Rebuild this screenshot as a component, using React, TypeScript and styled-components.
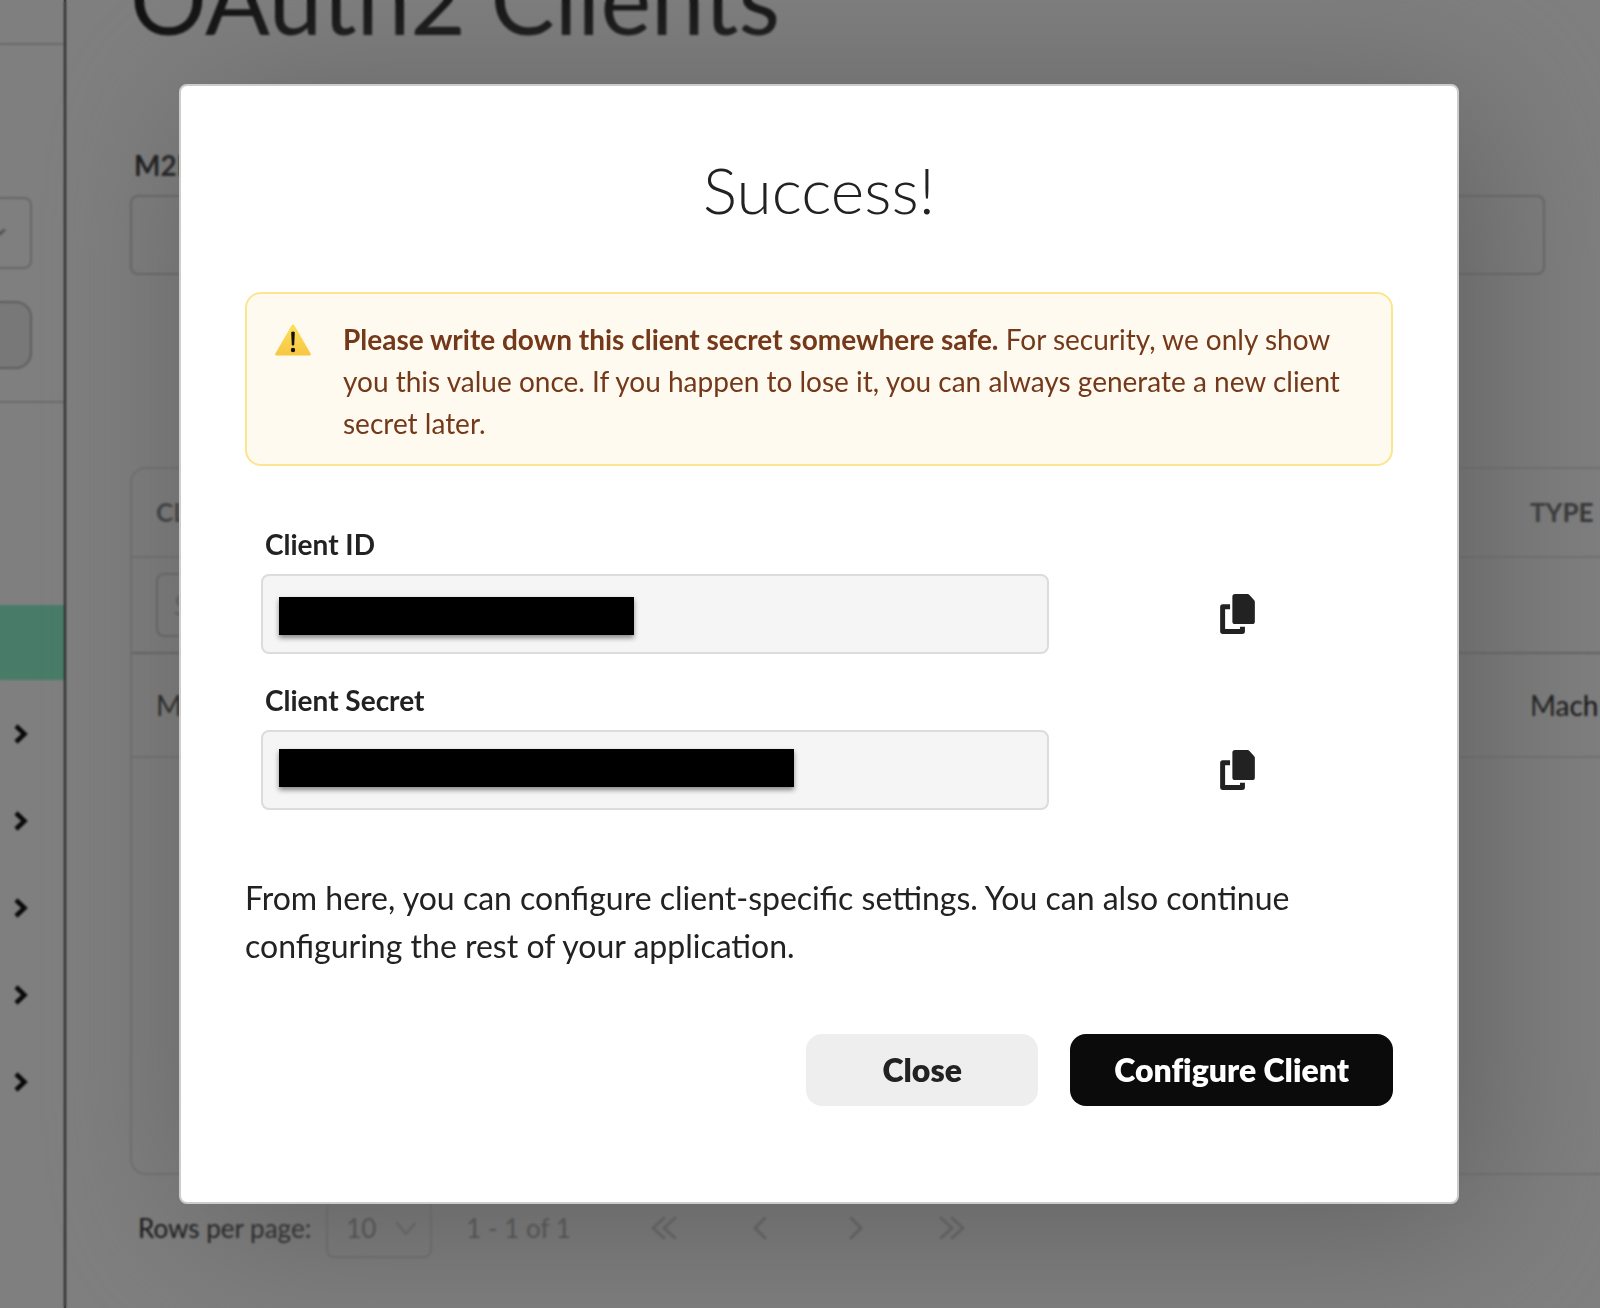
import React from "react";
import styled, { createGlobalStyle } from "styled-components";

const GlobalStyle = createGlobalStyle`
  *, *::before, *::after { box-sizing: border-box; }
  body {
    margin: 0;
    background: #fff;
    color: #222;
    font-family: Lato, "Liberation Sans", sans-serif;
    overflow: hidden;
  }
  button, input, select { font: inherit; color: inherit; }
  h1, h2, p { margin: 0; }
`;

/* ---------- Page behind the dialog ---------- */

const Page = styled.div`
  display: flex;
  height: 100vh;
  overflow: hidden;
`;

const Sidebar = styled.aside`
  flex: none;
  width: 66px;
  border-right: 2px solid #444;
`;

const SidebarTop = styled.div`
  height: 45px;
  border-bottom: 2px solid #d6d6d6;
`;

const SidebarControls = styled.div`
  display: flex;
  flex-direction: column;
  gap: 32px;
  height: 358px;
  padding: 152px 32px 0 0;
  border-bottom: 2px solid #d6d6d6;
`;

const SwitcherWrap = styled.div`
  position: relative;
`;

const Switcher = styled.select`
  display: block;
  appearance: none;
  width: 100%;
  height: 72px;
  border: 2px solid #ccc;
  border-left: 0;
  border-radius: 0 8px 8px 0;
  background: #fff;
`;

const SwitcherArrow = styled.svg`
  position: absolute;
  left: -16px;
  top: 32px;
  width: 22px;
  height: 12px;
  pointer-events: none;
`;

const SidebarButton = styled.button`
  width: 100%;
  height: 68px;
  border: 2px solid #bbb;
  border-left: 0;
  border-radius: 0 16px 16px 0;
  background: #f0f0f0;
`;

const Nav = styled.nav`
  display: flex;
  flex-direction: column;
  padding-top: 202px;
`;

const NavLink = styled.a<{ $active?: boolean }>`
  display: flex;
  align-items: center;
  justify-content: flex-end;
  height: ${(p) => (p.$active ? 75 : 87)}px;
  margin-bottom: ${(p) => (p.$active ? 10 : 0)}px;
  padding-right: 36px;
  background: ${(p) => (p.$active ? "#90f9d0" : "transparent")};
  color: #111;
`;

const Main = styled.main`
  flex: 1;
  min-width: 0;
  padding-left: 64px;
`;

const PageHeader = styled.header`
  display: flex;
  align-items: flex-end;
  height: 56px;
`;

const PageTitle = styled.h1`
  font-size: 96px;
  line-height: 116px;
  font-weight: 400;
  white-space: nowrap;
`;

const Label = styled.label`
  display: block;
  padding-left: 4px;
  font-size: 28px;
  line-height: 36px;
  font-weight: 700;
`;

const PageForm = styled.div`
  display: flex;
  flex-direction: column;
  gap: 12px;
  margin: 91px 55px 192px 0;
`;

const PageInput = styled.input`
  width: 100%;
  height: 80px;
  padding: 0 16px;
  border: 2px solid #ccc;
  border-radius: 8px;
  background: #fff;
  font-size: 28px;
`;

const TableFrame = styled.div`
  height: 708px;
  border: 2px solid #e0e0e0;
  border-right: 0;
  border-radius: 16px 0 0 16px;
  overflow: hidden;
`;

const Table = styled.table`
  width: 100%;
  table-layout: fixed;
  border-spacing: 0;
  text-align: left;
  font-size: 28px;
  line-height: 34px;
  white-space: nowrap;
`;

const TypeCol = styled.col`
  width: 94px;
`;

const HeadCell = styled.th`
  height: 89px;
  padding: 0 0 2px 24px;
  border-bottom: 2px solid #e0e0e0;
  color: #666;
  font-size: 26px;
  font-weight: 700;
`;

const FilterCell = styled.td`
  height: 96px;
  padding: 0 0 0 24px;
  border-bottom: 2px solid #c4c4c4;
`;

const FilterInput = styled.input`
  display: block;
  width: 320px;
  height: 64px;
  padding: 0 16px;
  border: 2px solid #ccc;
  border-radius: 8px;
  background: #fff;
  &::placeholder { color: #bbb; }
`;

const Cell = styled.td`
  height: 104px;
  padding: 0 0 0 24px;
  border-bottom: 2px solid #e0e0e0;
`;

const Pagination = styled.div`
  display: flex;
  align-items: center;
  padding: 23px 0 0 8px;
  font-size: 26px;
  line-height: 32px;
`;

const SizeSelectWrap = styled.div`
  position: relative;
  margin: 0 34px 0 15px;
`;

const SizeSelect = styled.select`
  display: block;
  appearance: none;
  width: 106px;
  height: 60px;
  padding: 0 0 0 18px;
  border: 2px solid #dcdcdc;
  border-radius: 8px;
  background: #fff;
  color: #888;
`;

const SizeArrow = styled.svg`
  position: absolute;
  right: 15px;
  top: 24px;
  width: 22px;
  height: 14px;
  pointer-events: none;
`;

const RangeText = styled.span`
  margin-right: 45px;
  color: #888;
`;

const PagerButton = styled.button`
  display: grid;
  place-items: center;
  width: 96px;
  height: 60px;
  padding: 0;
  border: 0;
  background: none;
  color: #b8b8b8;
`;

/* ---------- Dialog ---------- */

const Overlay = styled.div`
  position: fixed;
  inset: 0;
  padding: 84px 141px 0 179px;
  background: rgba(0, 0, 0, 0.5);
  backdrop-filter: blur(1px);
`;

const Dialog = styled.section`
  display: flex;
  flex-direction: column;
  gap: 60px;
  padding: 62px 64px 96px;
  border: 2px solid #ccc;
  border-radius: 8px;
  background: #fff;
  box-shadow: 20px 20px 160px #616161;
`;

const DialogTitle = styled.h2`
  font-size: 64px;
  line-height: 84px;
  font-weight: 300;
  text-align: center;
`;

const Alert = styled.div`
  display: flex;
  align-items: flex-start;
  gap: 32px;
  padding: 24px 28px 20px;
  border: 2px solid #fbe58f;
  border-radius: 16px;
  background: #fffaef;
  color: #74391a;
  font-size: 28px;
  line-height: 42px;
`;

const AlertIcon = styled.svg`
  flex: none;
  width: 36px;
  height: 32px;
  margin-top: 6px;
`;

const Fields = styled.div`
  display: flex;
  flex-direction: column;
  gap: 28px;
  padding-left: 16px;
`;

const Field = styled.div`
  display: grid;
  grid-template-columns: minmax(0, 1fr) 312px;
  gap: 12px 32px;
  align-items: center;
`;

const FieldLabel = styled(Label)`
  grid-column: 1 / -1;
`;

const SecretBox = styled.div`
  position: relative;
`;

const SecretInput = styled.input`
  display: block;
  width: 100%;
  height: 80px;
  padding: 0 16px;
  border: 2px solid #dcdcdc;
  border-radius: 8px;
  background: #f5f5f5;
  font-size: 28px;
`;

const Redaction = styled.span<{ $width: number; $top: number }>`
  position: absolute;
  left: 18px;
  top: ${(p) => p.$top}px;
  width: ${(p) => p.$width}px;
  height: 38px;
  background: #000;
  box-shadow: 0 3px 5px rgba(0, 0, 0, 0.45);
`;

const CopyButton = styled.button`
  justify-self: center;
  display: grid;
  place-items: center;
  padding: 8px;
  border: 0;
  background: none;
`;

const Note = styled.p`
  padding: 4px 0;
  font-size: 32px;
  line-height: 48px;
`;

const Actions = styled.div`
  display: flex;
  justify-content: flex-end;
  gap: 32px;
`;

const Action = styled.button<{ $primary?: boolean }>`
  min-width: 232px;
  height: 72px;
  padding: 0 44px;
  border: 0;
  border-radius: 16px;
  background: ${(p) => (p.$primary ? "#0b0b0b" : "#eee")};
  color: ${(p) => (p.$primary ? "#fff" : "#222")};
  font-size: 32px;
  line-height: 40px;
  font-weight: 800;
  font-variant-ligatures: none;
  white-space: nowrap;
`;

const NavChevron = () => (
  <svg width="14" height="20" viewBox="0 0 14 20" fill="none" stroke="currentColor" strokeWidth="4.500" aria-hidden>
    <path d="M2 2l8.500 8L2 18" />
  </svg>
);

const PagerIcon = ({ paths, width }: { paths: string[]; width: number }) => (
  <svg width={width} height="24" viewBox={`0 0 ${width} 24`} fill="none" stroke="currentColor" strokeWidth="3" strokeLinecap="round" strokeLinejoin="round" aria-hidden>
    {paths.map((d) => (
      <path key={d} d={d} />
    ))}
  </svg>
);

const CopyIcon = () => (
  <svg width="35" height="40" viewBox="0 0 105 121" fill="#222" aria-hidden>
    <path d="M45 0H83Q86 0 88 2L103 19Q105 21 105 24V83Q105 91 97 91H45Q37 91 37 83V8Q37 0 45 0Z" />
    <path d="M30 31V46H15V106H60V99H75V113Q75 121 67 121H8Q0 121 0 113V39Q0 31 8 31Z" />
  </svg>
);

const pager = [
  { label: "First page", width: 26, paths: ["M13 2L2 12l11 10", "M24 2L13 12l11 10"] },
  { label: "Previous page", width: 14, paths: ["M12 2L2 12l10 10"] },
  { label: "Next page", width: 14, paths: ["M2 2l10 10L2 22"] },
  { label: "Last page", width: 26, paths: ["M2 2l11 10L2 22", "M13 2l11 10-11 10"] },
];

const secrets = [
  { id: "client-id", label: "Client ID", width: 355, top: 23 },
  { id: "client-secret", label: "Client Secret", width: 515, top: 19 },
];

const navItems = ["Users", "Roles", "Organizations", "Settings", "Developers"];

export default function App() {
  return (
    <>
      <GlobalStyle />
      <Page>
        <Sidebar>
          <SidebarTop />
          <SidebarControls>
            <SwitcherWrap>
              <Switcher aria-label="Environment" />
              <SwitcherArrow viewBox="0 0 22 12" fill="none" stroke="#aaa" strokeWidth="3" strokeLinecap="round">
                <path d="M2 1l9 9 9-9" />
              </SwitcherArrow>
            </SwitcherWrap>
            <SidebarButton aria-label="Search" />
          </SidebarControls>
          <Nav>
            <NavLink href="#clients" $active aria-label="OAuth2 Clients" />
            {navItems.map((item) => (
              <NavLink key={item} href={`#${item.toLowerCase()}`} aria-label={item}>
                <NavChevron />
              </NavLink>
            ))}
          </Nav>
        </Sidebar>

        <Main>
          <PageHeader>
            <PageTitle>OAuth2 Clients</PageTitle>
          </PageHeader>
          <PageForm>
            <Label htmlFor="m2m">M2M</Label>
            <PageInput id="m2m" />
          </PageForm>
          <TableFrame>
            <Table>
              <colgroup>
                <col />
                <TypeCol />
              </colgroup>
              <thead>
                <tr>
                  <HeadCell>CLIENT</HeadCell>
                  <HeadCell>TYPE</HeadCell>
                </tr>
              </thead>
              <tbody>
                <tr>
                  <FilterCell>
                    <FilterInput aria-label="Search clients" placeholder="Search" />
                  </FilterCell>
                  <FilterCell />
                </tr>
                <tr>
                  <Cell>M2M</Cell>
                  <Cell>Machine</Cell>
                </tr>
              </tbody>
            </Table>
          </TableFrame>
          <Pagination>
            <label htmlFor="page-size">Rows per page:</label>
            <SizeSelectWrap>
              <SizeSelect id="page-size" defaultValue="10">
                <option>10</option>
              </SizeSelect>
              <SizeArrow viewBox="0 0 22 14" fill="none" stroke="#c8c8c8" strokeWidth="2.500" strokeLinecap="round" strokeLinejoin="round">
                <path d="M2 1l9 11 9-11" />
              </SizeArrow>
            </SizeSelectWrap>
            <RangeText>1 - 1 of 1</RangeText>
            {pager.map((p) => (
              <PagerButton key={p.label} aria-label={p.label}>
                <PagerIcon paths={p.paths} width={p.width} />
              </PagerButton>
            ))}
          </Pagination>
        </Main>
      </Page>

      <Overlay>
        <Dialog role="dialog" aria-modal="true" aria-labelledby="dialog-title">
          <DialogTitle id="dialog-title">Success!</DialogTitle>
          <Alert role="alert">
            <AlertIcon viewBox="0 0 36 32" aria-hidden>
              <defs>
                <linearGradient id="warn" x1="0" y1="0" x2="0" y2="1">
                  <stop offset="0" stopColor="#fbe05c" />
                  <stop offset="1" stopColor="#f8c642" />
                </linearGradient>
              </defs>
              <path d="M16.400 1.700Q18 -.5 19.600 1.700L35.600 29.400Q36.400 31.500 34.500 31.500H1.500Q-.4 31.500 .4 29.400Z" fill="url(#warn)" />
              <path d="M16.200 8.200Q18 7 19.800 8.200L19.200 21Q18 22 16.800 21Z" fill="#111" />
              <circle cx="18" cy="26" r="2.200" fill="#111" />
            </AlertIcon>
            <p>
              <strong>Please write down this client secret somewhere safe.</strong> For security, we only show you this
              value once. If you happen to lose it, you can always generate a new client secret later.
            </p>
          </Alert>
          <Fields>
            {secrets.map((s) => (
              <Field key={s.id}>
                <FieldLabel htmlFor={s.id}>{s.label}</FieldLabel>
                <SecretBox>
                  <SecretInput id={s.id} readOnly />
                  <Redaction $width={s.width} $top={s.top} />
                </SecretBox>
                <CopyButton aria-label={`Copy ${s.label}`}>
                  <CopyIcon />
                </CopyButton>
              </Field>
            ))}
          </Fields>
          <Note>
            From here, you can configure client-specific settings. You can also continue configuring the rest of your
            application.
          </Note>
          <Actions>
            <Action>Close</Action>
            <Action $primary>Configure Client</Action>
          </Actions>
        </Dialog>
      </Overlay>
    </>
  );
}
